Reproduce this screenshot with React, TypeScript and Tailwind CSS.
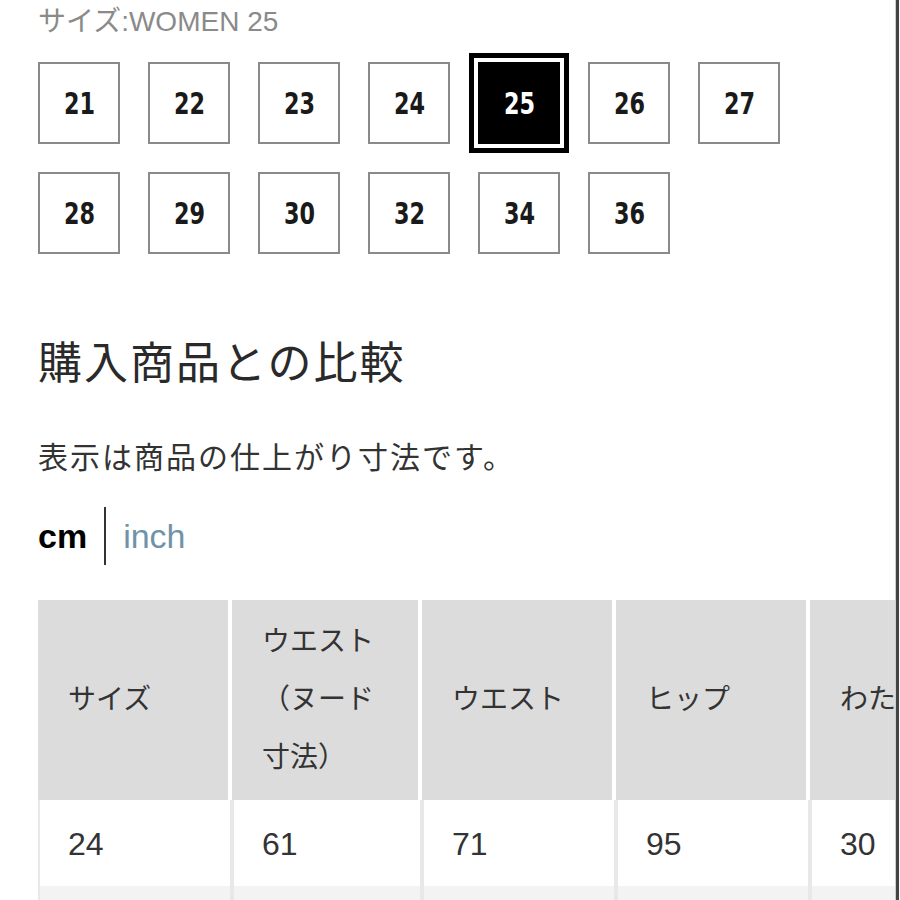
import React from 'react';

const SIZES_ROW1 = ['21', '22', '23', '24', '25', '26', '27'];
const SIZES_ROW2 = ['28', '29', '30', '32', '34', '36'];
const SELECTED = '25';

const HEADERS: React.ReactNode[] = [
  'サイズ',
  <>ウエスト<br />（ヌード<br />寸法）</>,
  'ウエスト',
  'ヒップ',
  'わたり幅',
];

const ROWS = [
  ['24', '61', '71', '95', '30'],
  ['', '', '', '', ''],
];

function SizeBox({ size }: { size: string }) {
  const selected = size === SELECTED;
  return (
    <button
      type="button"
      className={
        selected
          ? 'w-[82px] h-[82px] flex items-center justify-center border-2 border-black bg-black text-white outline-[5px] outline-solid outline-black outline-offset-[4px]'
          : 'w-[82px] h-[82px] flex items-center justify-center border-2 border-[#8a8a8a] bg-white text-[#1a1a1a]'
      }
    >
      <span className="inline-block scale-x-[0.8] font-['DejaVu_Sans_Condensed','DejaVu_Sans',sans-serif] font-bold text-[31px] leading-none">
        {size}
      </span>
    </button>
  );
}

export default function App() {
  return (
    <div className="w-[900px] h-[900px] overflow-hidden flex bg-white font-['Liberation_Sans','Noto_Sans_CJK_JP',sans-serif]">
      <div className="w-[896px] overflow-hidden border-r border-[#cfcfcf] pl-[38px] pt-[7px]">

        {/* selected size */}
        <p className="text-[28px] leading-[30px] text-[#8a8a8a]">サイズ:WOMEN 25</p>

        {/* size picker */}
        <div className="mt-[25px] flex flex-col gap-[28px]">
          <div className="flex gap-[28px]">
            {SIZES_ROW1.map(s => <SizeBox key={s} size={s} />)}
          </div>
          <div className="flex gap-[28px]">
            {SIZES_ROW2.map(s => <SizeBox key={s} size={s} />)}
          </div>
        </div>

        {/* comparison */}
        <h2 className="mt-[84px] text-[44px] leading-[52px] tracking-[2px] text-[#2a2a2a] font-normal">
          購入商品との比較
        </h2>

        <p className="mt-[50px] text-[30px] leading-[36px] tracking-[2px] text-[#333]">
          表示は商品の仕上がり寸法です。
        </p>

        <div className="mt-[31px] flex items-center h-[58px]">
          <span className="text-[34px] font-bold text-black">cm</span>
          <span className="mx-[17px] w-[2px] h-[58px] bg-[#333]" />
          <span className="text-[34px] text-[#6f93a8]">inch</span>
        </div>

        {/* size table */}
        <div className="mt-[35px] w-max">
          <div className="grid grid-cols-[190px_186px_190px_190px_190px] gap-x-[4px] bg-white">
            {HEADERS.map((h, i) => (
              <div
                key={i}
                className="h-[200px] bg-[#dcdcdc] pl-[30px] flex items-center text-[28px] leading-[58px] text-[#333] whitespace-nowrap"
              >
                <span>{h}</span>
              </div>
            ))}
          </div>
          {ROWS.map((row, r) => (
            <div
              key={r}
              className="grid grid-cols-[190px_186px_190px_190px_190px] gap-x-[4px] bg-[#e8e8e8] border-l-2 border-[#e8e8e8]"
            >
              {row.map((v, i) => (
                <div
                  key={i}
                  className={`h-[86px] pl-[28px] pt-[2px] flex items-center text-[32px] text-[#333] ${
                    r % 2 === 0 ? 'bg-white' : 'bg-[#f3f3f3]'
                  }`}
                >
                  {v}
                </div>
              ))}
            </div>
          ))}
        </div>

      </div>
      <div className="w-[3px] bg-[#444]" />
    </div>
  );
}
